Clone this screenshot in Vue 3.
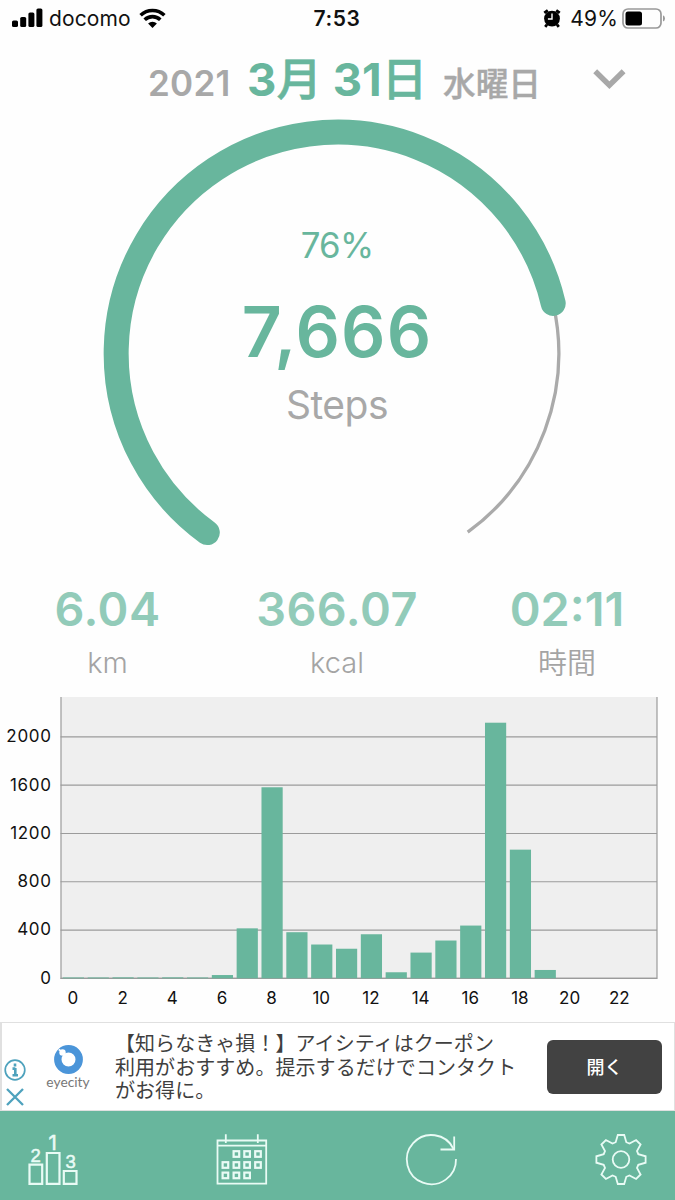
<script setup>
const stats = [
  { key: 'km', value: '6.04', unit: 'km' },
  { key: 'kcal', value: '366.07', unit: 'kcal' },
  { key: 'time', value: '02:11', unit: '時間' },
];

// steps per hour
const hours = [7, 7, 8, 7, 8, 7, 27, 414, 1583, 382, 280, 245, 365, 50, 213, 313, 437, 2118, 1066, 69, 0, 0, 0, 0];
const ticks = [0, 400, 800, 1200, 1600, 2000];
const hourLabels = [0, 2, 4, 6, 8, 10, 12, 14, 16, 18, 20, 22];

const left = 61;
const bottom = 288.3;
const step = 596 / 24;

const yOf = (value) => bottom - (value / 400) * 48.27;
const centerOf = (hour) => left + step * (hour + 0.5);

// centers of the day squares in the calendar icon
const calendarDays = [
  [20.4, 19], [31.1, 19], [42, 19],
  [9.4, 30], [20.4, 30], [31.1, 30], [42, 30],
  [9.4, 40.4], [20.4, 40.4], [31.1, 40.4],
];
</script>

<template>
  <div class="screen">
    <div class="status-bar">
      <div class="carrier">
        <svg class="signal" width="31" height="20" viewBox="0 0 31 20">
          <rect x="0" y="12.5" width="6" height="6.5" rx="1.6" />
          <rect x="8.2" y="9" width="6" height="10" rx="1.6" />
          <rect x="16.4" y="4.5" width="6" height="14.5" rx="1.6" />
          <rect x="24.4" y="0.5" width="6" height="18.5" rx="1.6" />
        </svg>
        <span class="carrier-name">docomo</span>
        <svg class="wifi" width="28" height="21" viewBox="0 0 28 21">
          <path d="M1.6 7.2A17.3 17.3 0 0 1 25.4 7.2" />
          <path d="M5.7 11.8A11.2 11.2 0 0 1 21.3 11.8" />
          <path class="dot" d="M13.5 20L9.1 15.5A6.3 6.3 0 0 1 17.9 15.5Z" />
        </svg>
      </div>
      <span class="clock">7:53</span>
      <div class="power">
        <svg width="18" height="20" viewBox="0 0 18 20">
          <circle cx="9" cy="9.6" r="7.9" />
          <path class="alarm-line" d="M1.3 3.9L4.8 1.3M16.7 3.9L13.2 1.3M4 15.6L2.2 17.8M14 15.6L15.8 17.8" />
          <path class="alarm-hand" d="M9 4.6V10H4.9" />
        </svg>
        <span class="percent">49%</span>
        <svg width="44" height="22" viewBox="0 0 44 22">
          <rect class="battery-case" x="1" y="1" width="38" height="19" rx="5" />
          <rect x="3.5" y="3.6" width="16.5" height="13.8" rx="2.5" />
          <path class="battery-tip" d="M41 7.2Q43 8.2 43 10.4T41 13.6Z" />
        </svg>
      </div>
    </div>

    <header class="date-bar">
      <span class="year">2021</span>
      <span class="day">3<span class="kanji">月</span> 31<span class="kanji">日</span></span>
      <span class="weekday">水曜日</span>
      <svg class="chevron" width="34" height="22" viewBox="0 0 34 22">
        <path d="M2.2 3.3L16.4 17.2L30.6 3.3" />
      </svg>
    </header>

    <svg class="gauge" width="675" height="460" viewBox="0 112 675 460">
      <path class="gauge-track" d="M553 303.2A221.4 221.4 0 0 1 467.7 532.2" />
      <path class="gauge-value" d="M207.3 532.6A221.4 221.4 0 1 1 553.2 303.4" />
      <text class="gauge-percent" x="337" y="258">76%</text>
      <text class="gauge-steps" x="337" y="357">7,666</text>
      <text class="gauge-unit" x="337" y="419">Steps</text>
    </svg>

    <section class="stats">
      <div v-for="stat in stats" :key="stat.key" :class="['stat', stat.key]">
        <div class="stat-value">{{ stat.value }}</div>
        <div class="stat-unit">{{ stat.unit }}</div>
      </div>
    </section>

    <svg class="chart" width="675" height="332" viewBox="0 0 675 332">
      <rect class="plot" x="61" y="7" width="596" height="281.3" />
      <line v-for="tick in ticks" :key="'l' + tick" class="grid" x1="60.5" x2="657" :y1="yOf(tick)" :y2="yOf(tick)" />
      <path class="grid" d="M61 7V288.3H657V7" />
      <rect
        v-for="(value, hour) in hours"
        :key="'b' + hour"
        class="bar"
        :x="centerOf(hour) - 10.6"
        :y="yOf(value)"
        width="21.2"
        :height="bottom - yOf(value)"
      />
      <text v-for="tick in ticks" :key="'t' + tick" class="y-label" x="51.7" :y="yOf(tick) + 5.3">{{ tick }}</text>
      <text v-for="hour in hourLabels" :key="'h' + hour" class="x-label" :x="centerOf(hour) - 0.5" y="314">{{ hour }}</text>
    </svg>

    <aside class="ad">
      <div class="ad-marks">
        <svg width="22" height="22" viewBox="0 0 22 22">
          <circle cx="11" cy="11" r="9.8" />
          <path class="thick" d="M11.3 9V16M8.5 9.6H11.3M8.5 16.3H14M11 4.6V7.4" />
        </svg>
        <svg width="22" height="20" viewBox="0 0 22 20">
          <path class="cross" d="M3 2L19 18M19 2L3 18" />
        </svg>
      </div>
      <div class="brand">
        <svg width="30" height="30" viewBox="0 0 30 30">
          <circle class="brand-ring" cx="15.5" cy="14.5" r="10.7" />
          <circle class="brand-dot" cx="9.5" cy="7.5" r="3.2" />
          <circle class="brand-dot" cx="6.5" cy="5" r="1" />
        </svg>
        <span>eyecity</span>
      </div>
      <p class="ad-text">
        【知らなきゃ損！】アイシティはクーポン<br />
        利用がおすすめ。提示するだけでコンタクト<br />
        がお得に。
      </p>
      <button class="ad-button">開く</button>
    </aside>

    <nav class="tabs">
      <svg width="52" height="54" viewBox="0 0 52 54">
        <path class="podium" d="M2.5 29.7H15.2V48.8H2.5ZM19.8 18H32.5V48.8H19.8ZM36.8 36H49.5V48.8H36.8Z" />
        <text x="8.6" y="26.5">2</text>
        <text class="first" x="25.6" y="14.7">1</text>
        <text x="43.6" y="33">3</text>
      </svg>
      <svg width="52" height="54" viewBox="0 0 52 54">
        <path d="M1.5 5.5H50.2V48.7H1.5ZM1.5 10.7H50.2M9.8 -0.8V8M41.8 -0.8V8" />
        <rect v-for="([x, y], i) in calendarDays" :key="i" :x="x - 2.8" :y="y - 2.8" width="5.6" height="5.6" />
      </svg>
      <svg width="52" height="54" viewBox="0 0 52 54">
        <path d="M50 24A24.6 24.6 0 1 1 47.5 13.8" />
        <path d="M48.2 1.5V14.5H34.5" />
      </svg>
      <svg width="52" height="54" viewBox="0 0 52 54">
        <circle cx="26" cy="24.5" r="8.3" />
        <path d="M22.8 0H29.2L31.3 7.2L34.5 8.6L41.1 5L45.6 9.5L42 16L43.3 19.2L50.6 21.3V27.7L43.3 29.8L42 33L45.6 39.5L41.1 44L34.5 40.4L31.3 41.8L29.2 49H22.8L20.7 41.8L17.5 40.4L10.9 44L6.4 39.5L10 33L8.7 29.8L1.4 27.7V21.3L8.7 19.2L10 16L6.4 9.5L10.9 5L17.5 8.6L20.7 7.2Z" />
      </svg>
    </nav>
  </div>
</template>

<style>
body {
  margin: 0;
  background: #fefefe;
}
</style>

<style scoped>
.screen {
  width: 675px;
  height: 1200px;
  display: flex;
  flex-direction: column;
  overflow: hidden;
  background: #fefefe;
  font-family: Inter, 'Noto Sans CJK JP', sans-serif;
  color: #111;
}

svg {
  display: block;
  flex: none;
}

.status-bar {
  display: grid;
  grid-template-columns: 1fr auto 1fr;
  align-items: center;
  height: 37px;
  box-sizing: border-box;
  padding: 0 9px 0 12px;
}

.carrier,
.power {
  display: flex;
  align-items: center;
}

.power {
  justify-content: flex-end;
}

.signal {
  margin-top: -2px;
}

.carrier-name {
  margin: 0 8px 0 6px;
  font-size: 21px;
  letter-spacing: 0.1px;
}

.wifi path {
  fill: none;
  stroke: #000;
  stroke-width: 3.6;
}

.wifi .dot {
  fill: #000;
  stroke: none;
}

.clock {
  margin-right: 4px;
  font-size: 21px;
  font-weight: 600;
  letter-spacing: 0.6px;
}

.percent {
  margin: 0 4px 0 9px;
  font-size: 21px;
  letter-spacing: 0.2px;
}

.alarm-line {
  stroke: #000;
  stroke-width: 2.8;
}

.alarm-hand {
  fill: none;
  stroke: #fff;
  stroke-width: 1.4;
}

.battery-case {
  fill: none;
  stroke: #999;
  stroke-width: 1.7;
}

.battery-tip {
  fill: #999;
}

.date-bar {
  display: flex;
  align-items: baseline;
  height: 75px;
  box-sizing: border-box;
  padding: 13px 0 0 148px;
  font-weight: 700;
  line-height: 60px;
  white-space: nowrap;
  color: #a8a8a8;
}

.year {
  width: 99px;
  font-size: 35px;
  font-weight: 600;
  letter-spacing: 0.3px;
}

.day {
  width: 196px;
  font-size: 45.5px;
  color: #68b69d;
}

.kanji {
  font-weight: 500;
  -webkit-text-stroke: 0.6px #68b69d;
}

.weekday {
  width: 150px;
  font-size: 32.7px;
  font-weight: 500;
  -webkit-text-stroke: 0.4px #a8a8a8;
}

.chevron {
  align-self: flex-start;
  margin-top: 18px;
}

.chevron path {
  fill: none;
  stroke: #a8a8a8;
  stroke-width: 5.5;
}

.gauge-track {
  fill: none;
  stroke: #aaa;
  stroke-width: 3.3;
}

.gauge-value {
  fill: none;
  stroke: #68b69d;
  stroke-width: 25;
  stroke-linecap: round;
}

.gauge text {
  text-anchor: middle;
}

.gauge-percent {
  font-size: 34.8px;
  letter-spacing: -0.8px;
  fill: #68b69d;
}

.gauge-steps {
  font-size: 69.5px;
  font-weight: 600;
  letter-spacing: 1.1px;
  fill: #68b69d;
}

.gauge-unit {
  font-size: 39px;
  letter-spacing: -0.5px;
  fill: #a8a8a8;
}

.stats {
  display: grid;
  grid-template-columns: 215px 244px 216px;
  height: 118px;
  box-sizing: border-box;
  padding-top: 10px;
  text-align: center;
}

.stat-value {
  font-size: 46.8px;
  font-weight: 600;
  line-height: 54px;
  letter-spacing: 0.5px;
  color: #92cbb9;
}

.time .stat-value {
  letter-spacing: 0;
}

.stat-unit {
  font-size: 29px;
  font-weight: 350;
  line-height: 56px;
  color: #a4a4a4;
}

.km .stat-unit,
.kcal .stat-unit {
  line-height: 54px;
}

.plot {
  fill: #efefef;
}

.grid {
  fill: none;
  stroke: #9b9b9b;
  stroke-width: 1.2;
}

.bar {
  fill: #68b69d;
}

.y-label,
.x-label {
  font-size: 17px;
  fill: #111;
}

.y-label {
  text-anchor: end;
  letter-spacing: 0.7px;
}

.x-label {
  text-anchor: middle;
}

.ad {
  display: flex;
  align-items: center;
  height: 89px;
  box-sizing: border-box;
  border: 1.5px solid #e0e0e0;
  border-left-width: 2px;
  background: #fff;
}

.ad-marks {
  display: flex;
  flex-direction: column;
  gap: 6px;
  width: 42px;
  padding: 32px 0 0 2px;
  box-sizing: border-box;
}

.ad-marks svg {
  fill: none;
  stroke: #4ea2bd;
  stroke-width: 1.7;
}

.ad-marks .thick {
  stroke-width: 2.6;
}

.ad-marks .cross {
  stroke-width: 2.3;
}

.brand {
  display: flex;
  flex-direction: column;
  align-items: center;
  width: 48px;
  font-family: Lato, sans-serif;
  font-size: 13.8px;
  line-height: 14px;
  color: #777;
}

.brand-ring {
  fill: none;
  stroke: #4b95d9;
  stroke-width: 7.4;
}

.brand-dot {
  fill: #fff;
}

.ad-text {
  width: 432px;
  margin: 0 0 0 23px;
  font-family: 'Noto Sans CJK JP', sans-serif;
  font-size: 20px;
  line-height: 23.6px;
  letter-spacing: 0.06px;
  white-space: nowrap;
  color: #3f3f3f;
}

.ad-button {
  width: 115px;
  height: 54px;
  padding: 0 0 2px;
  border: 0;
  border-radius: 6px;
  background: #424242;
  font-family: 'Noto Sans CJK JP', sans-serif;
  font-size: 18px;
  font-weight: 500;
  color: #fff;
}

.tabs {
  display: flex;
  justify-content: space-between;
  align-items: flex-start;
  height: 89px;
  box-sizing: border-box;
  padding: 24px 28px 0 27px;
  background: #68b69d;
}

.tabs svg {
  overflow: visible;
  fill: none;
  stroke: #e9fbf5;
  stroke-width: 1.8;
}

.tabs .podium,
.tabs rect {
  stroke-width: 2.2;
}

.tabs text {
  font-family: 'Liberation Sans', sans-serif;
  font-size: 18.5px;
  text-anchor: middle;
  fill: #e9fbf5;
  stroke: #e9fbf5;
  stroke-width: 0.5;
}

.tabs .first {
  font-family: Inter, sans-serif;
  font-size: 20.5px;
}
</style>
